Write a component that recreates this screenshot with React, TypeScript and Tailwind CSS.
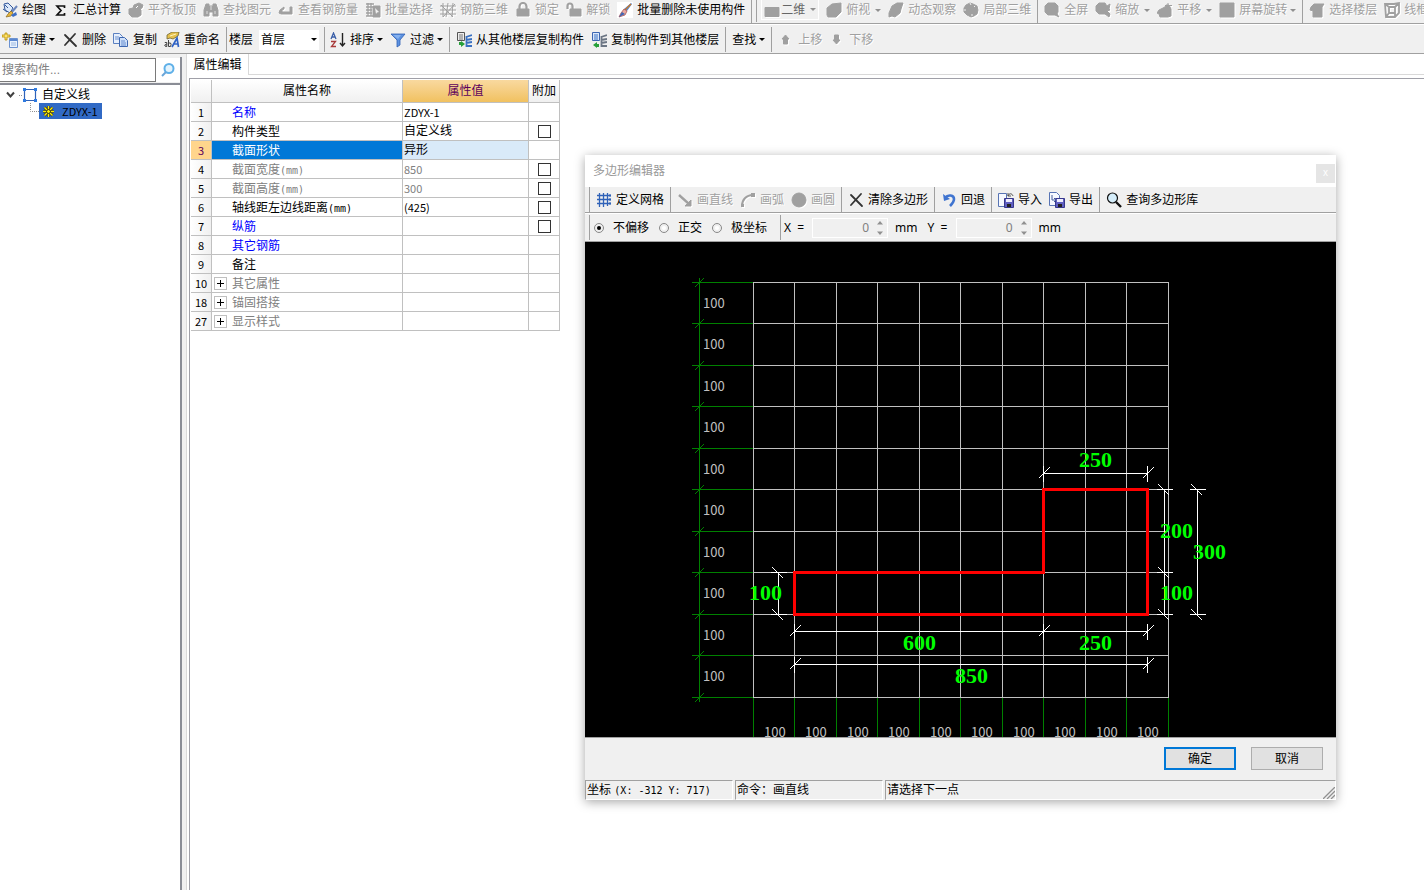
import React from "react";
import type { ReactNode } from "react";

type IconProps = { children: ReactNode; off?: boolean };

function Icon({ children, off }: IconProps) {
  return (
    <svg
      viewBox="0 0 16 16"
      aria-hidden="true"
      className={
        off
          ? "size-4 shrink-0 fill-[#a0a0a0] stroke-[#a0a0a0] drop-shadow-[1px_1px_0_#fff]"
          : "size-4 shrink-0 fill-none stroke-none"
      }
    >
      {children}
    </svg>
  );
}

const icons = {
  draw: (
    <Icon>
      <path d="M2 2l4-1 5 5-3 5-5-3z" fill="#dce9fa" stroke="#33589c" />
      <path d="M1 7l4 3M3 3l3 3" stroke="#33589c" />
      <path d="M15 4L9 11" stroke="#6b86bd" strokeWidth="2" />
      <path d="M6 12l3-3 2 2-2 3-5 1z" fill="#e7b53c" stroke="#8a6a1e" strokeWidth=".7" />
      <path d="M9 13l5-3 1 3-4 2z" fill="#3f6fc4" />
    </Icon>
  ),
  sum: (
    <Icon>
      <path d="M11.500 6V4H4l4 4.500L4 13h7.500v-2" stroke="#111" strokeWidth="1.700" />
    </Icon>
  ),
  slab: (
    <Icon off>
      <path d="M1 7l4-1 1-3 5-2 4 2-1 3-2 1 1 1v5l-3 2H4l-3-3z" />
      <path d="M8 6l2-2" stroke="#fff" />
    </Icon>
  ),
  binoculars: (
    <Icon off>
      <path d="M3 2h3v2h4V2h3l2 6v6h-5v-4H6v4H1V8z" />
      <path d="M8 4v4M4 9v3M12 9v3" stroke="#f0f0f0" strokeWidth=".8" />
    </Icon>
  ),
  rebar: (
    <Icon off>
      <path d="M2 8l4-3v2l-2 1v2h8V5h2v7H3L1 11z" />
    </Icon>
  ),
  batch: (
    <Icon off>
      <path d="M1 2h8M1 5h7M1 8h6M1 11h6M1 14h7M3 1v13M6 1v13" fill="none" strokeWidth="1.300" />
      <path d="M8 4h7v11H8z" />
      <path d="M10 6l4 4-2 .5L11 12z" fill="#f0f0f0" stroke="none" />
    </Icon>
  ),
  mesh: (
    <Icon off>
      <path d="M0 4h16M0 8h16M0 12h16M3 1v14M8 1L6 15M13 1l-1 14M1 3l12 12M3 15L15 2" fill="none" />
    </Icon>
  ),
  lock: (
    <Icon off>
      <path d="M4.500 8V4.500a3.500 3.500 0 017 0V8" fill="none" strokeWidth="2.200" />
      <path d="M2 7h12v7H2z" />
    </Icon>
  ),
  unlock: (
    <Icon off>
      <path d="M1.500 7V4a2.500 2.500 0 015 0v4" fill="none" strokeWidth="2.200" />
      <path d="M4 7h11v7H4z" />
    </Icon>
  ),
  brush: (
    <Icon>
      <path d="M0 0h16v16H0z" fill="#fff" />
      <path d="M14 1l1 1-5 7-3-2z" fill="#4f86d8" />
      <path d="M14 2L8 8" stroke="#c8792a" strokeWidth="1.500" />
      <path d="M7 7l3 2-2 4-6 2 2-4z" fill="#e9aaa0" stroke="#a14545" strokeWidth=".7" />
      <path d="M2 15l3-5 3 2z" fill="#3f66b5" />
    </Icon>
  ),
  rect: (
    <Icon off>
      <path d="M1 5.500h14v9H1z" />
    </Icon>
  ),
  cube: (
    <Icon off>
      <path d="M1 6l5-4 9-1v9l-5 5H2L1 13z" />
    </Icon>
  ),
  orbit: (
    <Icon off>
      <path d="M1 11l3-7 5-3h6l-2 6-1 4-5 4-3-1-3 1z" />
    </Icon>
  ),
  part3d: (
    <Icon off>
      <path d="M3 3l4-2 3 1 4 2 1 4-1 4-3 2-3 1-4-2-3-3 0-4z" />
      <path d="M7 1l1 2M1 8h2M12 4l-1 1M9 14v-2" stroke="#f0f0f0" />
    </Icon>
  ),
  full: (
    <Icon off>
      <path d="M4 1h7l3 3v6l-1 2 2 3-4-2H4l-3-3V4z" />
    </Icon>
  ),
  zoom: (
    <Icon off>
      <path d="M4 1h6l2 3 3-2-1 5 1 1-3 1 3 3-1 3-4-3H4L1 9V4z" />
    </Icon>
  ),
  pan: (
    <Icon off>
      <path d="M2 8l6-3 1-2h3l2 4v7l-3 1H3L2 12l-2-1z" />
      <path d="M11 1v6M8 3.500h7" />
    </Icon>
  ),
  rotate: (
    <Icon off>
      <path d="M1 1h14v14H1z" />
    </Icon>
  ),
  floor: (
    <Icon off>
      <path d="M2 5l3-3h10l-2 3v10H4V9L1 8z" />
    </Icon>
  ),
  wire: (
    <Icon off>
      <path d="M1 2h9l5-1v10l-4 4H2zM5 5h6v6H5zM1 2l4 3M11 5l4-4M5 11l-3 4M11 11v4" fill="none" strokeWidth="1.800" />
    </Icon>
  ),
  add: (
    <Icon>
      <path d="M7.500 6.500h8v9h-8z" fill="#eaf2fc" stroke="#6c92cf" />
      <path d="M8 7h7v2H8z" fill="#5a87d0" />
      <path d="M9 11h5M9 13h5" stroke="#9bb8e2" />
      <path d="M3 1h2v2h3v2H5v3H3V5H0V3h3z" fill="#ffe36b" stroke="#b48a00" strokeWidth=".8" />
    </Icon>
  ),
  cross: (
    <Icon>
      <path d="M3 3l11 11M13 2L3 13" stroke="#333" strokeWidth="1.800" strokeLinecap="round" />
    </Icon>
  ),
  copy: (
    <Icon>
      <path d="M.5 1.500h6l3 3v7h-9z" fill="#e6effc" stroke="#5b80c0" />
      <path d="M6.500 5.500h5l3 3v6h-8z" fill="#cfe0f9" stroke="#3d66b0" />
      <path d="M2 5h4M2 7h4M8 9h4M8 11h5M8 13h5" stroke="#4d78c4" strokeWidth=".8" />
    </Icon>
  ),
  rename: (
    <Icon>
      <path d="M3 3l5-3h7l-1 4-5 3-3-1-3 1z" fill="#e5c04c" stroke="#6e6534" strokeWidth=".8" />
      <path d="M6 4l6-2" stroke="#fff3b8" />
      <path d="M.8 10.500h2v4H1.500L.7 13l2-.8M4.500 8v6.500h2l.6-2-.6-1.500h-2" stroke="#444" />
      <path d="M8 15l5-9 1.500 9M10 12h4" stroke="#2f62c4" strokeWidth="1.700" />
    </Icon>
  ),
  sort: (
    <Icon>
      <path d="M1 7l2.500-6L6 7M2 5h3" stroke="#3a5fa8" strokeWidth="1.300" />
      <path d="M1 9.500h4.500L1.500 14.500H6" stroke="#a83a3a" strokeWidth="1.300" />
      <path d="M12.500 1v12M10 11l2.500 3 2.500-3" stroke="#222" strokeWidth="1.400" />
    </Icon>
  ),
  filter: (
    <Icon>
      <path d="M1 2h14l-5 6v5l-3 2V8z" fill="#5d92e0" stroke="#2e5fb5" strokeWidth=".8" />
      <path d="M3 3h8L8 7z" fill="#86b2f0" />
    </Icon>
  ),
  fromFloor: (
    <Icon>
      <path d="M1.500.5h7v8h-7z" fill="#eee" stroke="#555" />
      <path d="M3 3h4M3 5h4M3 7h4" stroke="#777" />
      <path d="M3 10v3h2v2l4-3-4-3v1z" fill="#27a03a" />
      <path d="M10 5l6-2M10 8l6-1M10 11l6-1M10 14h6M10.500 4v11" stroke="#3970c2" strokeWidth="1.800" />
    </Icon>
  ),
  toFloor: (
    <Icon>
      <path d="M1.500.5h7v8h-7z" fill="#dce8fb" stroke="#3c66b2" />
      <path d="M3 3h4M3 5h4M3 7h4" stroke="#3970c2" />
      <path d="M8 15v-3H6v-2l-4 3 4 3v-1z" fill="#27a03a" />
      <path d="M10 5l6-2M10 8l6-1M10 11l6-1M10 14h6M10.500 4v11" stroke="#6c7684" strokeWidth="1.800" />
    </Icon>
  ),
  up: (
    <Icon off>
      <path d="M7.500 3L11 7H9.500v5h-4V7H4z" />
    </Icon>
  ),
  down: (
    <Icon off>
      <path d="M7.500 12L11 8H9.500V3h-4v5H4z" />
    </Icon>
  ),
  grid: (
    <Icon>
      <path d="M3.500 1v14M7.500 1v14M11.500 1v13M1 3.500h14M1 7.500h14M1 11.500h14" stroke="#2f62b8" strokeWidth="1.300" />
      <path d="M14 2v12" stroke="#2f62b8" strokeDasharray="1 1" />
    </Icon>
  ),
  line: (
    <Icon off>
      <path d="M2 3l10 9" strokeWidth="2.400" />
      <path d="M14 8v6H8z" />
    </Icon>
  ),
  arc: (
    <Icon off>
      <path d="M2 14C2 8 6 3 13 3" fill="none" strokeWidth="2" />
      <path d="M11 1h4v4h-4zM1 12h3v3H1z" stroke="none" />
    </Icon>
  ),
  circle: (
    <Icon off>
      <circle cx="8" cy="8" r="7" />
    </Icon>
  ),
  undo: (
    <Icon>
      <path d="M4 6c3-4 9-3 9 1 0 3-2 5-4 7" stroke="#3f74d0" strokeWidth="2.600" />
      <path d="M2 2l1 7 6-2z" fill="#3f74d0" />
    </Icon>
  ),
  load: (
    <Icon>
      <path d="M.5 1.500h8v13h-8z" fill="#f6f9ff" stroke="#5874b4" />
      <path d="M6.500 6.500h9v9h-9z" fill="#5f5fc0" stroke="#37378c" />
      <path d="M8 7h6v3H8z" fill="#eef" />
      <path d="M9 12h4v3H9z" fill="#222" />
      <path d="M10 4c1-3 4-3 5 0M10 1v3h3" stroke="#444" strokeWidth=".9" />
    </Icon>
  ),
  save: (
    <Icon>
      <path d="M.5.5h7l3 3v10h-10z" fill="#f6f9ff" stroke="#5874b4" />
      <path d="M6.500 6.500h9v9h-9z" fill="#5f5fc0" stroke="#37378c" />
      <path d="M8 7h6v3H8z" fill="#eef" />
      <path d="M9 12h4v3H9z" fill="#222" />
      <path d="M3 3v5h3M5 6l2 2-2 2" stroke="#445c9c" />
    </Icon>
  ),
  query: (
    <Icon>
      <circle cx="6.500" cy="6" r="5" fill="#d4edfa" stroke="#111" strokeWidth="1.200" />
      <path d="M10 10l5 5" stroke="#111" strokeWidth="2.400" />
    </Icon>
  ),
};

function Caret({ off, wide }: { off?: boolean; wide?: boolean }) {
  return (
    <span className={wide ? "flex w-[11px] justify-end" : "flex w-[9px] justify-end"}>
      <svg viewBox="0 0 6 3" className={off ? "h-[3px] w-1.5 fill-[#909090]" : "h-[3px] w-1.5 fill-black"} aria-hidden="true">
        <path d="M0 0h6L3 3z" />
      </svg>
    </span>
  );
}

type ToolProps = { icon?: ReactNode; label: string; off?: boolean; caret?: boolean; wide?: boolean };

function Tool({ icon, label, off, caret, wide }: ToolProps) {
  return (
    <button
      type="button"
      disabled={off}
      className={
        off
          ? "flex h-5 shrink-0 items-center whitespace-nowrap text-[#a0a0a0] [text-shadow:1px_1px_0_#fff]"
          : "flex h-5 shrink-0 items-center whitespace-nowrap text-black"
      }
    >
      {icon && <span className="mr-1">{icon}</span>}
      {label}
      {caret && <Caret off={off} wide={wide} />}
    </button>
  );
}

function Sep() {
  return <span className="-mx-px h-[25px] w-px shrink-0 bg-[#a0a0a0]" />;
}

const unitFont = "font-['DejaVu_Sans_Mono',monospace] text-[10px]";
const valueFont = "font-['Noto_Sans_CJK_SC',sans-serif] text-[11px]";

type Row = {
  no: number;
  name: string;
  unit?: string;
  value?: string;
  latin?: boolean;
  tone: string;
  check?: boolean;
  group?: boolean;
  active?: boolean;
};

const rows: Row[] = [
  { no: 1, name: "名称", value: "ZDYX-1", latin: true, tone: "text-[#0000ff]" },
  { no: 2, name: "构件类型", value: "自定义线", tone: "text-black", check: true },
  { no: 3, name: "截面形状", value: "异形", tone: "text-white", active: true },
  { no: 4, name: "截面宽度", unit: "(mm)", value: "850", latin: true, tone: "text-[#808080]", check: true },
  { no: 5, name: "截面高度", unit: "(mm)", value: "300", latin: true, tone: "text-[#808080]", check: true },
  { no: 6, name: "轴线距左边线距离", unit: "(mm)", value: "(425)", latin: true, tone: "text-black", check: true },
  { no: 7, name: "纵筋", tone: "text-[#0000ff]", check: true },
  { no: 8, name: "其它钢筋", tone: "text-[#0000ff]" },
  { no: 9, name: "备注", tone: "text-black" },
  { no: 10, name: "其它属性", tone: "text-[#808080]", group: true },
  { no: 18, name: "锚固搭接", tone: "text-[#808080]", group: true },
  { no: 27, name: "显示样式", tone: "text-[#808080]", group: true },
];

function PropertyTable() {
  const line = "border-r border-b border-[#c0c0c0] p-0 font-normal";
  return (
    <table className="w-[369px] table-fixed border-separate border-spacing-0">
      <colgroup>
        <col className="w-[21px]" />
        <col className="w-[191px]" />
        <col className="w-[126px]" />
        <col className="w-[31px]" />
      </colgroup>
      <thead>
        <tr className="h-[23px]">
          <th className={`${line} bg-linear-to-b from-white to-[#f0f0f0]`} />
          <th className={`${line} bg-linear-to-b from-white to-[#f0f0f0]`}>属性名称</th>
          <th className={`${line} bg-linear-to-b from-[#f9d99f] to-[#f1c15f] text-[#5c005c]`}>属性值</th>
          <th className={`${line} whitespace-nowrap bg-linear-to-b from-white to-[#f0f0f0]`}>附加</th>
        </tr>
      </thead>
      <tbody>
        {rows.map((r) => (
          <tr key={r.no} className="h-[19px] leading-[18px]">
            <th
              scope="row"
              className={`${line} ${valueFont} leading-4 ${
                r.active ? "bg-[#ffd58c] text-[#5c005c]" : "bg-linear-to-r from-white to-[#f0f0f0]"
              }`}
            >
              {r.no}
            </th>
            <td className={`${line} ${r.tone} ${r.active ? "bg-[#0078d7]" : "bg-white"}`}>
              <div className="flex h-[18px] items-center">
                <span className="flex w-5 shrink-0 pl-0.5">
                  {r.group && (
                    <button
                      type="button"
                      aria-label={`展开${r.name}`}
                      className="flex size-[13px] items-center justify-center border border-[#c0c0c0] bg-white"
                    >
                      <svg viewBox="0 0 7 7" className="size-[7px] stroke-black" aria-hidden="true">
                        <path d="M0 3.500h7M3.500 0v7" />
                      </svg>
                    </button>
                  )}
                </span>
                <span className="pt-0.5">
                  {r.name}
                  {r.unit && <span className={unitFont}>{r.unit}</span>}
                </span>
              </div>
            </td>
            <td
              className={`${line} ${r.active ? "bg-[#d9eaf9]" : "bg-white"} ${
                r.no === 4 || r.no === 5 ? "text-[#808080]" : "text-black"
              }`}
            >
              <div className={r.latin ? `h-[18px] pl-px ${valueFont}` : "h-[18px] pl-px"}>{r.value}</div>
            </td>
            <td className={`${line} bg-white`}>
              {r.check && (
                <input
                  type="checkbox"
                  aria-label={`附加 ${r.name}`}
                  className="mx-auto block size-[13px] appearance-none border border-[#333] bg-white checked:bg-[#333]"
                />
              )}
            </td>
          </tr>
        ))}
      </tbody>
    </table>
  );
}

const xs = [753, 794, 836, 877, 919, 960, 1002, 1043, 1085, 1126, 1168].map((v) => v + 0.5);
const ys = [282, 323, 365, 406, 448, 489, 531, 572, 614, 655, 697].map((v) => v + 0.5);

function HDim({ y, at }: { y: number; at: number[] }) {
  return (
    <g className="stroke-white">
      <path d={`M${at[0]} ${y}H${at[at.length - 1]}`} />
      {at.map((x) => (
        <React.Fragment key={x}>
          <path d={`M${x} ${y - 8}v16`} />
          <path d={`M${x - 5} ${y + 5}L${x + 6} ${y - 6}`} />
        </React.Fragment>
      ))}
    </g>
  );
}

function VDim({ x, at }: { x: number; at: number[] }) {
  return (
    <g className="stroke-white">
      <path d={`M${x} ${at[0]}V${at[at.length - 1]}`} />
      {at.map((y) => (
        <React.Fragment key={y}>
          <path d={`M${x - 8} ${y}h16`} />
          <path d={`M${x - 6} ${y - 5}L${x + 5} ${y + 6}`} />
        </React.Fragment>
      ))}
    </g>
  );
}

const dimLabels: [string, number, number][] = [
  ["250", 1079, 467],
  ["200", 1160, 538],
  ["300", 1193, 559],
  ["100", 1160, 600],
  ["100", 749, 600],
  ["600", 903, 650],
  ["250", 1079, 650],
  ["850", 955, 683],
];

function Canvas() {
  return (
    <svg viewBox="585 242 751 495" className="block w-full bg-black" role="img" aria-label="多边形">
      <g className="fill-none stroke-[#008000]" shapeRendering="crispEdges">
        <path d="M699.500 278V702" />
        {ys.map((y) => (
          <path key={y} d={`M692 ${y}H753`} />
        ))}
        {xs.map((x) => (
          <path key={x} d={`M${x} 698V737`} />
        ))}
        {ys.map((y) => (
          <path key={y} d={`M695 ${y + 4.5}L704 ${y - 4.5}`} />
        ))}
      </g>
      <g className="fill-none stroke-[#c0c0c0]" shapeRendering="crispEdges">
        {ys.map((y) => (
          <path key={y} d={`M753 ${y}H1169`} />
        ))}
        {xs.map((x) => (
          <path key={x} d={`M${x} 282V698`} />
        ))}
      </g>
      <g className="fill-[#c0c0c0] font-['Noto_Sans_CJK_SC',sans-serif] text-[13px]">
        {ys.slice(0, 10).map((y) => (
          <text key={y} x="703" y={y + 25.5}>
            100
          </text>
        ))}
        {xs.slice(0, 10).map((x) => (
          <text key={x} x={x + 10.5} y="737">
            100
          </text>
        ))}
      </g>
      <g className="fill-none" shapeRendering="crispEdges">
        <HDim y={473.5} at={[1043.5, 1147.5]} />
        <HDim y={631.5} at={[794.5, 1043.5, 1147.5]} />
        <HDim y={664.5} at={[794.5, 1147.5]} />
        <VDim x={1164.5} at={[489.5, 572.5, 614.5]} />
        <VDim x={1197.5} at={[489.5, 614.5]} />
        <VDim x={778.5} at={[572.5, 614.5]} />
        <path
          d="M794.500 572.500H1043.500V489.500H1147.500V614.500H794.500z"
          className="stroke-[#ff0000] stroke-3"
        />
      </g>
      <g className="fill-[#00ff00] font-['Liberation_Serif',serif] text-[22px] font-bold">
        {dimLabels.map(([t, x, y]) => (
          <text key={`${x}-${y}`} x={x} y={y}>
            {t}
          </text>
        ))}
      </g>
    </svg>
  );
}

function Radio({ label, checked }: { label: string; checked?: boolean }) {
  return (
    <label className="flex shrink-0 items-center whitespace-nowrap">
      <input
        type="radio"
        name="offset"
        defaultChecked={checked}
        className="mr-[9px] size-[10px] appearance-none rounded-full border border-[#888] bg-white bg-clip-content p-0.5 checked:bg-black"
      />
      {label}
    </label>
  );
}

function Coord({ axis }: { axis: string }) {
  return (
    <label className="flex shrink-0 items-center font-['Noto_Sans',sans-serif] text-[12px]">
      <span className="w-7 whitespace-pre">{axis}  =</span>
      <span className="mr-[7px] flex h-5 w-[76px] items-center border border-white pr-1 text-[#808080]">
        <input
          type="text"
          disabled
          defaultValue="0"
          className="w-0 grow bg-transparent pr-2 text-right text-[12px] text-[#808080]"
        />
        <svg viewBox="0 0 6 14" className="h-3.5 w-1.5 fill-[#909090]" aria-hidden="true">
          <path d="M0 3.500h6L3 0zM0 10.500h6L3 14z" />
        </svg>
      </span>
      mm
    </label>
  );
}

function PolygonEditor() {
  return (
    <section
      role="dialog"
      aria-label="多边形编辑器"
      className="absolute top-[155px] left-[585px] flex w-[751px] flex-col bg-[#f0f0f0] shadow-[0_2px_10px_rgba(0,0,0,0.35)]"
    >
      <header className="flex h-8 items-center justify-between bg-white pl-2 text-[#999]">
        <h2>多边形编辑器</h2>
        <button
          type="button"
          aria-label="关闭"
          className="mt-1 mr-px flex size-[19px] items-center justify-center bg-[#e5e5e5] text-[10px] text-white"
        >
          x
        </button>
      </header>
      <div className="flex h-[26px] items-center gap-[7px] border-b border-[#a0a0a0] pl-[5px]">
        <Sep />
        <Tool icon={icons.grid} label="定义网格" />
        <Sep />
        <Tool icon={icons.line} label="画直线" off />
        <Tool icon={icons.arc} label="画弧" off />
        <Tool icon={icons.circle} label="画圆" off />
        <Sep />
        <Tool icon={icons.cross} label="清除多边形" />
        <Sep />
        <Tool icon={icons.undo} label="回退" />
        <Sep />
        <Tool icon={icons.load} label="导入" />
        <Tool icon={icons.save} label="导出" />
        <Sep />
        <Tool icon={icons.query} label="查询多边形库" />
      </div>
      <div className="flex h-[29px] items-center border-t border-b border-t-white border-b-[#a0a0a0] pl-[5px]">
        <Sep />
        <div className="flex gap-2.5 pl-[5px]">
          <Radio label="不偏移" checked />
          <Radio label="正交" />
          <Radio label="极坐标" />
        </div>
        <span className="mr-[3px] ml-[13px] h-[25px] w-px bg-[#a0a0a0]" />
        <div className="flex gap-2.5">
          <Coord axis="X" />
          <Coord axis="Y" />
        </div>
      </div>
      <Canvas />
      <div className="flex h-[43px] justify-end gap-[15px] border-t border-[#a0a0a0] pt-[9px] pr-[13px]">
        <button type="button" className="h-[23px] w-[72px] border-2 border-[#0078d7] bg-[#e1e1e1] leading-none">
          确定
        </button>
        <button type="button" className="h-[23px] w-[72px] border border-[#adadad] bg-[#e1e1e1] leading-none">
          取消
        </button>
      </div>
      <footer className="flex h-5 gap-0.5 leading-[18px] whitespace-pre">
        <span className="w-[148px] border border-[#a0a0a0] border-r-white border-b-white pl-px">
          坐标 <span className={unitFont}>(X: -312 Y: 717)</span>
        </span>
        <span className="w-[148px] border border-[#a0a0a0] border-r-white border-b-white pl-px">命令：画直线</span>
        <span className="flex grow items-end justify-between border border-[#a0a0a0] border-r-white border-b-white pl-px">
          请选择下一点
          <svg viewBox="0 0 12 12" className="size-3 fill-none stroke-[#909090]" aria-hidden="true">
            <path d="M0 12L12 0M4 12l8-8M8 12l4-4" strokeWidth="1.300" />
          </svg>
        </span>
      </footer>
    </section>
  );
}

function TreePanel() {
  return (
    <aside className="flex w-[182px] shrink-0 flex-col border-r-2 border-[#8a8d96] bg-white">
      <div className="flex h-7 items-center border-b-2 border-[#8a8d96] bg-[#f0f0f0]">
        <input
          type="search"
          aria-label="搜索构件"
          placeholder="搜索构件..."
          className="h-6 w-[156px] border border-l-0 border-[#7a7a7a] bg-white pl-0.5 placeholder:text-[#808080]"
        />
        <button type="button" aria-label="搜索" className="flex h-6 grow items-center justify-center bg-white">
          <svg viewBox="0 0 14 14" className="size-3.5 fill-[#e3f3fd] stroke-[#5fb0e8]" aria-hidden="true">
            <circle cx="8" cy="5.500" r="4.500" strokeWidth="2" />
            <path d="M5 9l-4 4" stroke="#6aa5d8" strokeWidth="2" />
          </svg>
        </button>
      </div>
      <ul className="pt-0.5 leading-4">
        <li>
          <div className="flex h-4 items-center">
            <svg viewBox="0 0 42 16" className="h-4 w-[42px] fill-none" aria-hidden="true">
              <path d="M7 5.500l3.500 4L14 5.500" stroke="#404040" strokeWidth="2" />
              <path d="M19 8.500h4" stroke="#909090" strokeDasharray="1 1" />
              <path d="M24.500 2.500h11v11h-11z" stroke="#2f62b8" strokeWidth="1.200" />
              <path d="M23 1h3v3h-3zM34 1h3v3h-3zM23 12h3v3h-3zM34 12h3v3h-3z" fill="#2f7be0" />
            </svg>
            自定义线
          </div>
          <ul>
            <li className="flex h-4 items-center">
              <svg viewBox="0 0 39 16" className="h-4 w-[39px] fill-none" aria-hidden="true">
                <path d="M30.500 0v8.500H39" stroke="#909090" strokeDasharray="1 1" />
              </svg>
              <span className="flex h-4 w-[63px] items-center bg-[#316ac5] pl-1">
                <svg viewBox="0 0 11 11" className="mr-2 size-[11px] fill-none" aria-hidden="true">
                  <path d="M5.500 0v11M0 5.500h11M1.500 1.500l8 8M9.500 1.500l-8 8" stroke="#222" strokeWidth="2.600" />
                  <path d="M5.500 0v11M0 5.500h11M1.500 1.500l8 8M9.500 1.500l-8 8" stroke="#ffee00" strokeWidth="1.500" />
                  <circle cx="5.500" cy="5.500" r="2" fill="#ffee00" stroke="#222" />
                </svg>
                <span className={valueFont}>ZDYX-1</span>
              </span>
            </li>
          </ul>
        </li>
      </ul>
    </aside>
  );
}

export default function App() {
  return (
    <div className="relative flex min-h-screen w-full flex-col overflow-hidden bg-[#f0f0f0] font-['Liberation_Sans','Noto_Sans_CJK_SC',sans-serif] text-[12px] leading-4 text-black">
      <div className="flex h-6 items-start gap-[7px] overflow-hidden border-b border-[#a0a0a0] pl-0.5 whitespace-nowrap">
        <Tool icon={icons.draw} label="绘图" />
        <Tool icon={icons.sum} label="汇总计算" />
        <Tool icon={icons.slab} label="平齐板顶" off />
        <Tool icon={icons.binoculars} label="查找图元" off />
        <Tool icon={icons.rebar} label="查看钢筋量" off />
        <Tool icon={icons.batch} label="批量选择" off />
        <Tool icon={icons.mesh} label="钢筋三维" off />
        <Tool icon={icons.lock} label="锁定" off />
        <Tool icon={icons.unlock} label="解锁" off />
        <Tool icon={icons.brush} label="批量删除未使用构件" />
        <Sep />
        <span className="-ml-0.5 h-[22px] w-px shrink-0 bg-[#a0a0a0]" />
        <button
          type="button"
          disabled
          className="-ml-[3px] flex h-5 shrink-0 items-center border border-t-0 border-white pr-0.5 pl-0.5 whitespace-nowrap text-[#666]"
        >
          {icons.rect}
          <span className="ml-px">二维</span>
          <Caret off wide />
        </button>
        <Tool icon={icons.cube} label="俯视" off caret wide />
        <Tool icon={icons.orbit} label="动态观察" off />
        <Tool icon={icons.part3d} label="局部三维" off />
        <Sep />
        <Tool icon={icons.full} label="全屏" off />
        <Tool icon={icons.zoom} label="缩放" off caret wide />
        <Tool icon={icons.pan} label="平移" off caret wide />
        <Tool icon={icons.rotate} label="屏幕旋转" off caret />
        <Sep />
        <Tool icon={icons.floor} label="选择楼层" off />
        <Tool icon={icons.wire} label="线框" off />
      </div>
      <div className="flex h-[30px] items-center gap-[7px] overflow-hidden border-t border-b border-t-white border-b-[#a0a0a0] pt-px pl-0.5 whitespace-nowrap">
        <Tool icon={icons.add} label="新建" caret />
        <Tool icon={icons.cross} label="删除" />
        <Tool icon={icons.copy} label="复制" />
        <Tool icon={icons.rename} label="重命名" />
        <Sep />
        <label htmlFor="floor" className="-ml-1 shrink-0">
          楼层
        </label>
        <span className="relative -ml-px flex h-5 w-[60px] shrink-0 items-center bg-white">
          <select id="floor" className="h-5 w-full appearance-none bg-transparent pl-0.5">
            <option>首层</option>
          </select>
          <span className="pointer-events-none absolute right-0.5">
            <Caret />
          </span>
        </span>
        <span className="-mx-0.5 h-[25px] w-px shrink-0 bg-[#a0a0a0]" />
        <Tool icon={icons.sort} label="排序" caret />
        <Tool icon={icons.filter} label="过滤" caret />
        <Sep />
        <Tool icon={icons.fromFloor} label="从其他楼层复制构件" />
        <Tool icon={icons.toFloor} label="复制构件到其他楼层" />
        <Sep />
        <Tool label="查找" caret />
        <Sep />
        <Tool icon={icons.up} label="上移" off />
        <Tool icon={icons.down} label="下移" off />
      </div>
      <main className="flex grow">
        <div className="flex pt-[3px]">
          <TreePanel />
        </div>
        <div className="ml-1 flex min-w-0 grow flex-col border-l border-[#d9d9d9] bg-white">
          <div className="flex h-[21px]" role="tablist">
            <button type="button" role="tab" aria-selected="true" className="w-[62px] border-r border-[#d9d9d9] text-center">
              属性编辑
            </button>
            <span className="grow border-b border-[#d9d9d9]" />
          </div>
          <div className="mt-[3px] ml-0.5 grow border-t border-l border-[#a0a0a8] pt-px pl-px">
            <PropertyTable />
          </div>
        </div>
      </main>
      <PolygonEditor />
    </div>
  );
}
